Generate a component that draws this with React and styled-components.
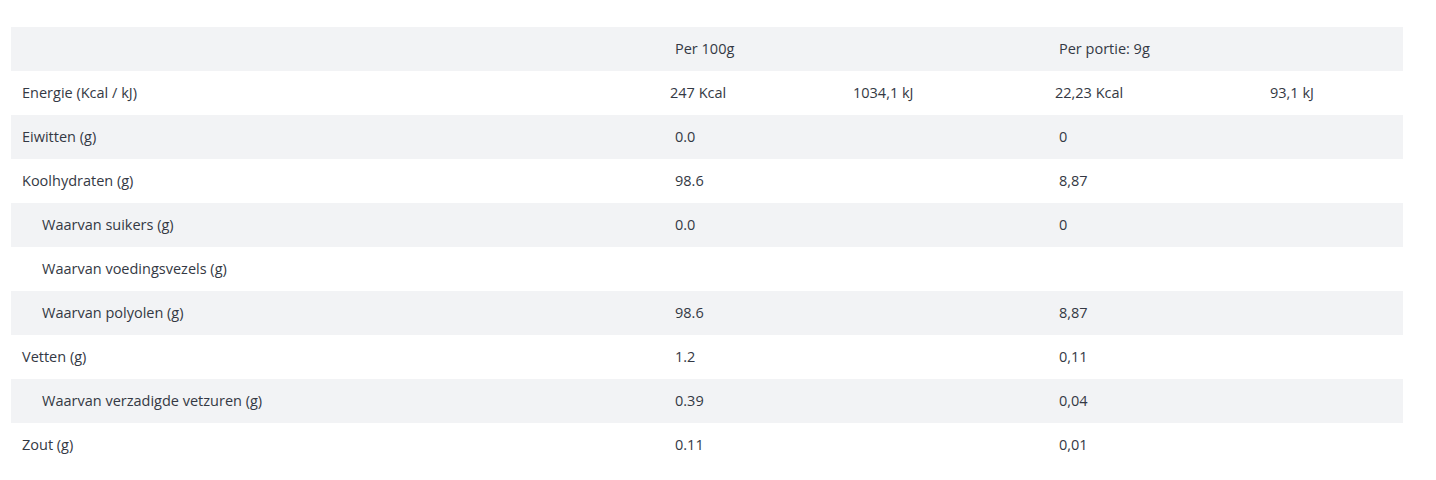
import React from 'react';
import styled, { createGlobalStyle } from 'styled-components';

const GlobalStyle = createGlobalStyle`
  body {
    margin: 0;
    background: #fff;
    font-family: "Open Sans", "Noto Sans", Arial, sans-serif;
  }
`;

const Wrapper = styled.div`
  padding: 27px 33px 0 11px;
`;

const Table = styled.div`
  display: flex;
  flex-direction: column;
  width: 1392px;
  color: #343944;
  font-size: 14.5px;
`;

const Row = styled.div`
  display: grid;
  grid-template-columns: 653px 384px 355px;
  box-sizing: border-box;
  height: 44px;
  padding-bottom: 2px;
  align-items: center;
  background: ${(p) => (p.$shaded ? '#f2f3f5' : '#fff')};
`;

const Label = styled.div`
  padding-left: ${(p) => (p.$sub ? '31px' : '11px')};
`;

const Cell = styled.div`
  padding-left: 11px;
`;

const SplitCell = styled.div`
  display: grid;
  grid-template-columns: ${(p) => p.$first}px 1fr;
  padding-left: ${(p) => p.$offset}px;
`;

const rows = [
  { label: 'Eiwitten (g)', a: '0.0', b: '0' },
  { label: 'Koolhydraten (g)', a: '98.6', b: '8,87' },
  { label: 'Waarvan suikers (g)', a: '0.0', b: '0', sub: true },
  { label: 'Waarvan voedingsvezels (g)', a: '', b: '', sub: true },
  { label: 'Waarvan polyolen (g)', a: '98.6', b: '8,87', sub: true },
  { label: 'Vetten (g)', a: '1.2', b: '0,11' },
  { label: 'Waarvan verzadigde vetzuren (g)', a: '0.39', b: '0,04', sub: true },
  { label: 'Zout (g)', a: '0.11', b: '0,01' },
];

function App() {
  return (
    <Wrapper>
      <GlobalStyle />
      <Table>
        <Row $shaded>
          <Label />
          <Cell>Per 100g</Cell>
          <Cell>Per portie: 9g</Cell>
        </Row>
        <Row>
          <Label>Energie (Kcal / kJ)</Label>
          <SplitCell $offset={6} $first={183}>
            <span>247 Kcal</span>
            <span>1034,1 kJ</span>
          </SplitCell>
          <SplitCell $offset={7} $first={215}>
            <span>22,23 Kcal</span>
            <span>93,1 kJ</span>
          </SplitCell>
        </Row>
        {rows.map((r, i) => (
          <Row key={r.label} $shaded={i % 2 === 0}>
            <Label $sub={r.sub}>{r.label}</Label>
            <Cell>{r.a}</Cell>
            <Cell>{r.b}</Cell>
          </Row>
        ))}
      </Table>
    </Wrapper>
  );
}

export default App;
